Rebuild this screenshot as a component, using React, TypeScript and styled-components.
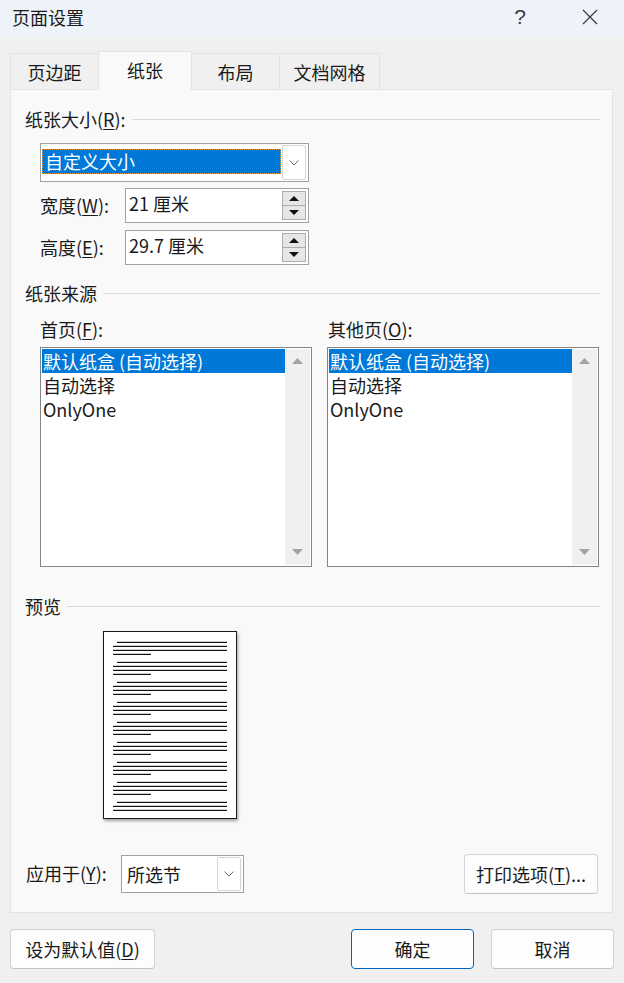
import React from "react";
import styled, { createGlobalStyle } from "styled-components";

const GlobalStyle = createGlobalStyle`
    html, body {
        margin: 0;
        padding: 0;
        background: #f0f0f0;
    }
    body {
        font-family: "Noto Sans CJK SC", "Noto Sans", sans-serif;
        font-size: 18px;
        color: #1a1a1a;
    }
    * {
        box-sizing: border-box;
    }
    u {
        text-underline-offset: 2px;
    }
`;

const Window = styled.div`
    width: 624px;
    height: 983px;
    display: flex;
    flex-direction: column;
    background: #f0f0f0;
    overflow: hidden;
`;

const TitleBar = styled.div`
    height: 38px;
    flex: none;
    display: flex;
    align-items: center;
    padding-left: 12px;
    padding-bottom: 4px;
    background: #eef3f9;
    line-height: 24px;
`;

const TitleText = styled.div`
    flex: 1;
`;

const TitleButton = styled.div<{ $gap?: number }>`
    width: 60px;
    height: 34px;
    display: flex;
    align-items: center;
    justify-content: center;
    margin-right: ${(p) => p.$gap ?? 0}px;
    font-family: "Liberation Sans", sans-serif;
    font-size: 21px;
    color: #3a3a3a;
`;

const Body = styled.div`
    flex: 1;
    display: flex;
    flex-direction: column;
    padding: 0 11px 0 10px;
`;

const TabStrip = styled.div`
    display: flex;
    align-items: flex-end;
    height: 38px;
    margin-top: 13px;
    padding-left: 1px;
    position: relative;
    z-index: 1;
`;

const Tab = styled.div<{ $w: number; $active?: boolean }>`
    width: ${(p) => p.$w}px;
    height: ${(p) => (p.$active ? 39 : 36)}px;
    margin-bottom: ${(p) => (p.$active ? -1 : 0)}px;
    display: flex;
    align-items: center;
    justify-content: center;
    padding-bottom: ${(p) => (p.$active ? 3 : 0)}px;
    background: ${(p) => (p.$active ? "#f9f9f9" : "#f0f0f0")};
    border: 1px solid #e3e3e3;
    border-bottom: none;
    margin-left: -1px;
    line-height: 24px;
`;

const Panel = styled.div`
    height: 824px;
    border: 1px solid #e3e3e3;
    background: #f9f9f9;
    padding: 17px 12px 0 14px;
    display: flex;
    flex-direction: column;
`;

const SectionHeader = styled.div<{ $top?: number }>`
    display: flex;
    align-items: center;
    height: 24px;
    line-height: 24px;
    margin-top: ${(p) => p.$top ?? 0}px;
    &::after {
        content: "";
        flex: 1;
        height: 1px;
        background: #dadada;
        margin-left: 6px;
    }
`;

const Indent = styled.div`
    margin-left: 15px;
    display: flex;
    flex-direction: column;
`;

const Combo = styled.div<{ $w: number; $h: number; $top?: number }>`
    width: ${(p) => p.$w}px;
    height: ${(p) => p.$h}px;
    margin-top: ${(p) => p.$top ?? 0}px;
    border: 1px solid #a0a0a0;
    background: #fff;
    display: flex;
    align-items: center;
    padding: 0 2px 0 1px;
    line-height: 24px;
`;

const ComboValue = styled.div<{ $selected?: boolean }>`
    flex: 1;
    height: 25px;
    padding-left: ${(p) => (p.$selected ? 3 : 4)}px;
    background: ${(p) => (p.$selected ? "#0078d7" : "transparent")};
    color: ${(p) => (p.$selected ? "#fff" : "#1a1a1a")};
    outline: ${(p) => (p.$selected ? "1px dotted #f0a040" : "none")};
    outline-offset: -1px;
    margin-right: 1px;
    margin-top: ${(p) => (p.$selected ? -3 : 0)}px;
`;

const DropButton = styled.div<{ $h: number }>`
    width: 24px;
    height: ${(p) => p.$h}px;
    border: 1px solid #d4d4d4;
    border-radius: 2px;
    background: #fff;
    display: flex;
    align-items: center;
    justify-content: center;
`;

const FieldRow = styled.div<{ $top: number }>`
    display: flex;
    align-items: center;
    margin-top: ${(p) => p.$top}px;
`;

const FieldLabel = styled.div`
    width: 85px;
    line-height: 24px;
    padding-bottom: 2px;
`;

const SpinBox = styled.div`
    width: 184px;
    height: 35px;
    border: 1px solid #a0a0a0;
    background: #fff;
    display: flex;
    padding: 1px 2px 1px 3px;
`;

const SpinText = styled.div`
    flex: 1;
    line-height: 26px;
`;

const SpinButtons = styled.div`
    width: 24px;
    display: flex;
    flex-direction: column;
    padding-top: 1px;
`;

const SpinButton = styled.div`
    height: 15px;
    border: 1px solid #acacac;
    background: #e6e6e6;
    display: flex;
    align-items: center;
    justify-content: center;
    & + & {
        margin-top: -1px;
    }
`;

const SourceRow = styled.div`
    display: flex;
    gap: 15px;
`;

const SourceColumn = styled.div`
    display: flex;
    flex-direction: column;
    width: 272px;
`;

const ListLabel = styled.div<{ $shift?: number }>`
    margin-top: 12px;
    line-height: 24px;
    padding-left: ${(p) => p.$shift ?? 0}px;
`;

const ListBox = styled.div`
    margin-top: 6px;
    height: 220px;
    border: 1px solid #858585;
    background: #fff;
    padding: 1px;
    display: flex;
`;

const ListItems = styled.div`
    flex: 1;
    display: flex;
    flex-direction: column;
`;

const ListItem = styled.div<{ $selected?: boolean }>`
    height: 24px;
    line-height: 24px;
    padding-left: 1px;
    white-space: nowrap;
    background: ${(p) => (p.$selected ? "#0078d7" : "transparent")};
    color: ${(p) => (p.$selected ? "#fff" : "#1a1a1a")};
`;

const ScrollBar = styled.div`
    width: 25px;
    background: #f0f0f0;
    display: flex;
    flex-direction: column;
    justify-content: space-between;
    align-items: center;
    padding: 9px 0 10px;
`;

const PagePreview = styled.div`
    margin: 13px 0 0 78px;
    width: 134px;
    height: 188px;
    background: #fff;
    border: 1px solid #1a1a1a;
    box-shadow: 1px 2px 3px rgba(0, 0, 0, 0.35);
`;

const ApplyRow = styled.div`
    display: flex;
    align-items: center;
    margin-top: 35px;
    padding-left: 1px;
    padding-right: 2px;
`;

const ApplyLabel = styled.div`
    width: 95px;
    line-height: 24px;
    padding-bottom: 2px;
`;

const Spacer = styled.div`
    flex: 1;
`;

const Button = styled.div<{ $w: number; $primary?: boolean }>`
    width: ${(p) => p.$w}px;
    height: 40px;
    display: flex;
    align-items: center;
    justify-content: center;
    background: #fdfdfd;
    border: 1px solid ${(p) => (p.$primary ? "#0067c0" : "#d3d3d3")};
    border-bottom-color: ${(p) => (p.$primary ? "#0067c0" : "#c2c2c2")};
    border-radius: 4px;
    line-height: 24px;
    white-space: nowrap;
`;

const ButtonRow = styled.div`
    display: flex;
    gap: 17px;
    margin-top: 16px;
    margin-right: -1px;
`;

const Chevron = () => (
    <svg width="12" height="8" viewBox="0 0 12 8">
        <path d="M1.5 1.5 L6 6 L10.5 1.5" fill="none" stroke="#6a6a6a" strokeWidth="1" />
    </svg>
);

const Triangle = ({ up, color, w = 10, h = 5 }: { up?: boolean; color: string; w?: number; h?: number }) => (
    <svg width={w} height={h} viewBox={`0 0 ${w} ${h}`}>
        <polygon points={up ? `0,${h} ${w / 2},0 ${w},${h}` : `0,0 ${w},0 ${w / 2},${h}`} fill={color} />
    </svg>
);

const CloseIcon = () => (
    <svg width="18" height="18" viewBox="0 0 18 18">
        <path d="M2 2 L16 16 M16 2 L2 16" stroke="#333" strokeWidth="1.1" fill="none" />
    </svg>
);

// the little document drawn in the preview box
const PageLines = () => {
    const lines: React.ReactNode[] = [];
    for (let p = 0; p < 9; p++) {
        const y = 9.8 + p * 20;
        const rows = p === 8 ? 3 : 4;
        for (let r = 0; r < rows; r++) {
            const x1 = r === 0 ? 13 : 9;
            const x2 = r === 3 ? 47 : 123;
            lines.push(<rect key={`${p}-${r}`} x={x1} y={y + r * 4} width={x2 - x1} height={1.2} fill="#111" />);
        }
    }
    return (
        <svg width="132" height="186" viewBox="0 0 132 186">
            {lines}
        </svg>
    );
};

const Spin = ({ value }: { value: string }) => (
    <SpinBox>
        <SpinText>{value}</SpinText>
        <SpinButtons>
            <SpinButton>
                <Triangle up color="#111" w={10} h={5} />
            </SpinButton>
            <SpinButton>
                <Triangle color="#111" w={10} h={5} />
            </SpinButton>
        </SpinButtons>
    </SpinBox>
);

const PaperList = ({ label, shift }: { label: React.ReactNode; shift?: number }) => (
    <SourceColumn>
        <ListLabel $shift={shift}>{label}</ListLabel>
        <ListBox>
            <ListItems>
                <ListItem $selected>默认纸盒 (自动选择)</ListItem>
                <ListItem>自动选择</ListItem>
                <ListItem>OnlyOne</ListItem>
            </ListItems>
            <ScrollBar>
                <Triangle up color="#a3a3a3" w={11} h={6} />
                <Triangle color="#a3a3a3" w={11} h={6} />
            </ScrollBar>
        </ListBox>
    </SourceColumn>
);

function App() {
    return (
        <>
            <GlobalStyle />
            <Window>
                <TitleBar>
                    <TitleText>页面设置</TitleText>
                    <TitleButton $gap={10}>?</TitleButton>
                    <TitleButton $gap={4}>
                        <CloseIcon />
                    </TitleButton>
                </TitleBar>
                <Body>
                    <TabStrip>
                        <Tab $w={89}>页边距</Tab>
                        <Tab $w={94} $active>纸张</Tab>
                        <Tab $w={89}>布局</Tab>
                        <Tab $w={101}>文档网格</Tab>
                    </TabStrip>
                    <Panel>
                        <SectionHeader>
                            纸张大小(<u>R</u>):
                        </SectionHeader>
                        <Indent>
                            <Combo $w={269} $h={39} $top={12}>
                                <ComboValue $selected>自定义大小</ComboValue>
                                <DropButton $h={35}>
                                    <Chevron />
                                </DropButton>
                            </Combo>
                            <FieldRow $top={6}>
                                <FieldLabel>
                                    宽度(<u>W</u>):
                                </FieldLabel>
                                <Spin value="21 厘米" />
                            </FieldRow>
                            <FieldRow $top={7}>
                                <FieldLabel>
                                    高度(<u>E</u>):
                                </FieldLabel>
                                <Spin value="29.7 厘米" />
                            </FieldRow>
                        </Indent>

                        <SectionHeader $top={16}>纸张来源</SectionHeader>
                        <Indent>
                            <SourceRow>
                                <PaperList
                                    label={
                                        <>
                                            首页(<u>F</u>):
                                        </>
                                    }
                                />
                                <PaperList
                                    shift={1}
                                    label={
                                        <>
                                            其他页(<u>O</u>):
                                        </>
                                    }
                                />
                            </SourceRow>
                        </Indent>

                        <SectionHeader $top={27}>预览</SectionHeader>
                        <PagePreview>
                            <PageLines />
                        </PagePreview>

                        <ApplyRow>
                            <ApplyLabel>
                                应用于(<u>Y</u>):
                            </ApplyLabel>
                            <Combo $w={123} $h={38}>
                                <ComboValue>所选节</ComboValue>
                                <DropButton $h={34}>
                                    <Chevron />
                                </DropButton>
                            </Combo>
                            <Spacer />
                            <Button $w={134}>
                                打印选项(<u>T</u>)...
                            </Button>
                        </ApplyRow>
                    </Panel>

                    <ButtonRow>
                        <Button $w={145}>
                            设为默认值(<u>D</u>)
                        </Button>
                        <Spacer />
                        <Button $w={123} $primary>
                            确定
                        </Button>
                        <Button $w={123}>取消</Button>
                    </ButtonRow>
                </Body>
            </Window>
        </>
    );
}

export default App;
